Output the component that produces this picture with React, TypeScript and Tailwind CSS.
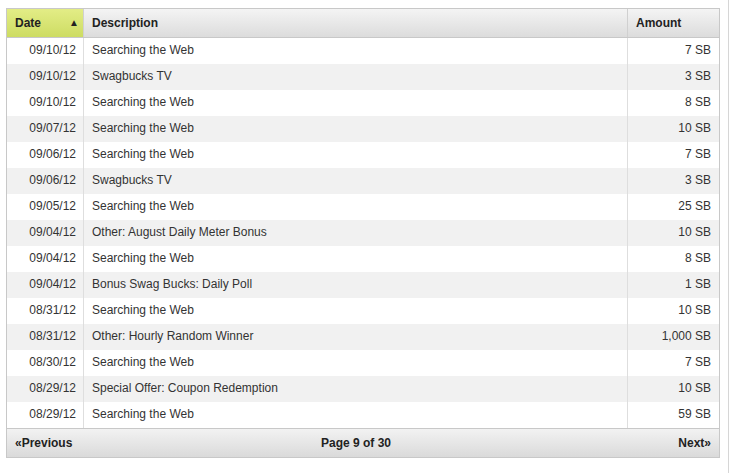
import React from "react";

const rows: [string, string, string][] = [
  ["09/10/12", "Searching the Web", "7 SB"],
  ["09/10/12", "Swagbucks TV", "3 SB"],
  ["09/10/12", "Searching the Web", "8 SB"],
  ["09/07/12", "Searching the Web", "10 SB"],
  ["09/06/12", "Searching the Web", "7 SB"],
  ["09/06/12", "Swagbucks TV", "3 SB"],
  ["09/05/12", "Searching the Web", "25 SB"],
  ["09/04/12", "Other: August Daily Meter Bonus", "10 SB"],
  ["09/04/12", "Searching the Web", "8 SB"],
  ["09/04/12", "Bonus Swag Bucks: Daily Poll", "1 SB"],
  ["08/31/12", "Searching the Web", "10 SB"],
  ["08/31/12", "Other: Hourly Random Winner", "1,000 SB"],
  ["08/30/12", "Searching the Web", "7 SB"],
  ["08/29/12", "Special Offer: Coupon Redemption", "10 SB"],
  ["08/29/12", "Searching the Web", "59 SB"],
];

export default function App() {
  return (
    <div
      className="w-[731px] h-[473px] bg-white flex text-[12px] text-[#333]"
      style={{ fontFamily: '"Liberation Sans", Arial, sans-serif' }}
    >
      <div className="w-[728px] pl-[6px] pt-[8px]">
        <div className="w-[714px] border border-[#c8c8c8]">
          {/* header */}
          <div className="flex h-[29px] border-b border-[#c8c8c8] font-bold text-[#222] bg-gradient-to-b from-[#f4f4f4] to-[#dcdcdc]">
            <div className="w-[77px] border-r border-[#d0d0d0] flex items-center justify-between pl-[8px] pr-[4px] bg-gradient-to-b from-[#e3ed86] to-[#cddc62]">
              <span>Date</span>
              <span className="text-[10px] leading-none">▲</span>
            </div>
            <div className="w-[544px] border-r border-[#d0d0d0] flex items-center pl-[8px]">
              Description
            </div>
            <div className="flex-1 flex items-center pl-[8px]">Amount</div>
          </div>
          {/* rows */}
          {rows.map((r, i) => (
            <div
              key={i}
              className={`flex h-[26px] leading-[25px] ${i % 2 === 1 ? "bg-[#f1f1f1]" : "bg-white"}`}
            >
              <div className="w-[77px] border-r border-[#dedede] text-right pr-[7px]">
                {r[0]}
              </div>
              <div className="w-[544px] border-r border-[#dedede] pl-[8px]">
                {r[1]}
              </div>
              <div className="flex-1 text-right pr-[8px]">{r[2]}</div>
            </div>
          ))}
          {/* footer */}
          <div className="flex h-[29px] border-t border-[#c8c8c8] font-bold text-[#222] items-center bg-gradient-to-b from-[#f2f2f2] to-[#dadada]">
            <div className="w-[77px] pl-[8px] whitespace-nowrap">«Previous</div>
            <div className="w-[544px] text-center">Page 9 of 30</div>
            <div className="flex-1 text-right pr-[8px]">Next»</div>
          </div>
        </div>
      </div>
      <div className="w-px h-full bg-[#d6d6d6]" />
    </div>
  );
}
